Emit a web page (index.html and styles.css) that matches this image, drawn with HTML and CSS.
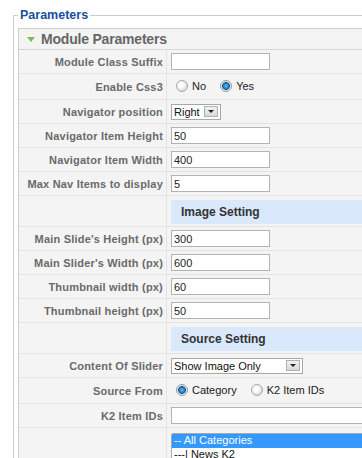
FILE: index.html
```html
<!DOCTYPE html>
<html lang="en">
<head>
    <meta charset="UTF-8">
    <meta name="viewport" content="width=device-width, initial-scale=1.0">
    <title>Module Parameters</title>
    <link rel="stylesheet" href="styles.css">
</head>
<body>

    <fieldset class="params">
        <legend>Parameters</legend>

        <div class="panel">
            <h3 class="panel-title"><span class="arrow"></span>Module Parameters</h3>

            <table class="paramlist">
                <tr>
                    <td class="key">Module Class Suffix</td>
                    <td class="value"><input type="text" class="text"></td>
                </tr>
                <tr class="radio-row">
                    <td class="key">Enable Css3</td>
                    <td class="value">
                        <label><input type="radio" name="css3"> No</label>
                        <label><input type="radio" name="css3" checked> Yes</label>
                    </td>
                </tr>
                <tr>
                    <td class="key">Navigator position</td>
                    <td class="value">
                        <span class="select">
                            <select><option>Right</option><option>Left</option></select>
                            <span class="select-btn"></span>
                        </span>
                    </td>
                </tr>
                <tr>
                    <td class="key">Navigator Item Height</td>
                    <td class="value"><input type="text" class="text" value="50"></td>
                </tr>
                <tr>
                    <td class="key">Navigator Item Width</td>
                    <td class="value"><input type="text" class="text" value="400"></td>
                </tr>
                <tr>
                    <td class="key">Max Nav Items to display</td>
                    <td class="value"><input type="text" class="text" value="5"></td>
                </tr>

                <!-- Image Setting -->
                <tr class="section">
                    <td class="key"></td>
                    <td class="value"><div class="section-title">Image Setting</div></td>
                </tr>
                <tr>
                    <td class="key">Main Slide's Height (px)</td>
                    <td class="value"><input type="text" class="text" value="300"></td>
                </tr>
                <tr>
                    <td class="key">Main Slider's Width (px)</td>
                    <td class="value"><input type="text" class="text" value="600"></td>
                </tr>
                <tr>
                    <td class="key">Thumbnail width (px)</td>
                    <td class="value"><input type="text" class="text" value="60"></td>
                </tr>
                <tr>
                    <td class="key">Thumbnail height (px)</td>
                    <td class="value"><input type="text" class="text" value="50"></td>
                </tr>

                <!-- Source Setting -->
                <tr class="section">
                    <td class="key"></td>
                    <td class="value"><div class="section-title">Source Setting</div></td>
                </tr>
                <tr>
                    <td class="key">Content Of Slider</td>
                    <td class="value">
                        <span class="select select-wide">
                            <select><option>Show Image Only</option><option>Show Image and Text</option></select>
                            <span class="select-btn"></span>
                        </span>
                    </td>
                </tr>
                <tr class="radio-row">
                    <td class="key">Source From</td>
                    <td class="value">
                        <label><input type="radio" name="source" checked> Category</label>
                        <label><input type="radio" name="source"> K2 Item IDs</label>
                    </td>
                </tr>
                <tr>
                    <td class="key">K2 Item IDs</td>
                    <td class="value"><input type="text" class="text text-wide"></td>
                </tr>
                <tr class="list-row">
                    <td class="key"></td>
                    <td class="value">
                        <select class="listbox" multiple size="4">
                            <option selected>-- All Categories</option>
                            <option>---| News K2</option>
                            <option>---| Sport K2</option>
                            <option>---| Travel K2</option>
                        </select>
                    </td>
                </tr>
            </table>
        </div>
    </fieldset>

</body>
</html>
```

FILE: styles.css
```css
/* General */
html, body {
    overflow: hidden;
}

body {
    margin: 0;
    font-family: Arial, "Liberation Sans", sans-serif;
    font-size: 11px;
    background-color: #fff;
}

/* Fieldset */
.params {
    margin: 8px 0 0 13px;
    padding: 5px 4px 10px;
    width: 640px;
    border: 1px solid #ccc;
}

.params legend {
    padding: 0 2px;
    font-size: 12.5px;
    line-height: 15px;
    font-weight: bold;
    color: #1b4f9f;
}

/* Panel */
.panel {
    border: 1px solid #ccc;
    background-color: #f4f4f4;
}

.panel-title {
    display: flex;
    align-items: center;
    margin: 0;
    height: 20px;
    padding-left: 8px;
    border-bottom: 1px solid #d6d6d6;
    font-size: 14px;
    letter-spacing: -0.2px;
    line-height: 20px;
    color: #666;
}

.arrow {
    width: 0;
    height: 0;
    margin-right: 6px;
    border-left: 4.5px solid transparent;
    border-right: 4.5px solid transparent;
    border-top: 5px solid #83b95c;
}

/* Param table */
.paramlist {
    border-collapse: collapse;
    width: 100%;
}

.paramlist td {
    height: 17px;
    padding: 3px 3px;
    border-bottom: 1px solid #e3e3e3;
    vertical-align: middle;
}

.paramlist .key {
    width: 141px;
    border-right: 1px solid #e3e3e3;
    text-align: right;
    font-weight: bold;
    letter-spacing: 0.2px;
    color: #6a6a6a;
    white-space: nowrap;
}

.paramlist .value {
    padding-left: 4px;
    color: #222;
}

.radio-row td {
    height: 19px;
}

/* Inputs */
input.text {
    box-sizing: border-box;
    width: 99px;
    height: 17px;
    margin: 0;
    padding: 0 2px;
    border: 1px solid #b3b3b3;
    font-family: Arial, "Liberation Sans", sans-serif;
    font-size: 11px;
    color: #222;
    background: #fff;
}

input.text-wide {
    width: 300px;
}

.value label {
    display: inline-flex;
    align-items: center;
    margin-right: 6px;
}

input[type="radio"] {
    appearance: none;
    box-sizing: border-box;
    width: 12px;
    height: 12px;
    margin: 0 4px 0 5px;
    border: 1px solid #a9a9a9;
    border-radius: 50%;
    background: radial-gradient(circle at 40% 40%, #fff 0, #fff 2px, #dcdcdc 6px);
}

input[type="radio"]:checked {
    border-color: #8c9aa6;
    background: radial-gradient(circle, #6fc0ee 0, #1a6fae 3px, #0d4f86 3.5px, #dfe6ec 4.2px, #fff 6px);
}

/* Fake dropdown */
.select {
    display: inline-flex;
    align-items: center;
    box-sizing: border-box;
    height: 16px;
    border: 1px solid #a8a8a8;
    background: #fff;
}

.select select {
    appearance: none;
    width: 32px;
    height: 14px;
    padding: 0 0 0 2px;
    border: none;
    outline: none;
    background: transparent;
    font-family: Arial, "Liberation Sans", sans-serif;
    font-size: 11px;
    color: #111;
}

.select-wide select {
    width: 114px;
}

.select-btn {
    display: flex;
    align-items: center;
    justify-content: center;
    box-sizing: border-box;
    width: 14px;
    height: 11px;
    margin-right: 2px;
    border: 1px solid #b0b0b0;
    background: linear-gradient(#f2f2f2, #d8d8d8);
}

.select-btn::after {
    content: "";
    border-left: 3px solid transparent;
    border-right: 3px solid transparent;
    border-top: 3px solid #222;
}

/* Section headers */
.section td {
    padding: 4px 0 2px 4px;
}

.section-title {
    height: 24px;
    padding-left: 10px;
    line-height: 24px;
    font-size: 12px;
    font-weight: bold;
    color: #333;
    background-color: #d9e8fb;
}

/* Category list */
.list-row td {
    padding-top: 5px;
    vertical-align: top;
}

.listbox {
    width: 300px;
    margin: 0;
    border: 1px solid #a8a8a8;
    font-family: Arial, "Liberation Sans", sans-serif;
    font-size: 11px;
    color: #111;
    overflow: hidden;
}

.listbox option {
    padding: 0 2px 1px;
}

.listbox option:checked {
    background: linear-gradient(#3399ff, #3399ff);
    color: #fff;
}
```
